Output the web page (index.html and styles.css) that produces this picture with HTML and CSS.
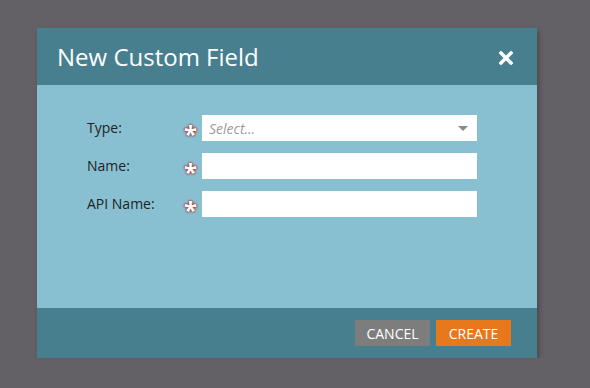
FILE: index.html
```html
<!DOCTYPE html>
<html lang="en">
<head>
    <meta charset="UTF-8">
    <title>New Custom Field</title>
    <link rel="stylesheet" href="styles.css">
</head>
<body>
    <div class="modal">
        <div class="modal-header">
            <h1>New Custom Field</h1>
            <span class="close">
                <svg width="14" height="14" viewBox="0 0 14 14">
                    <path d="M2 2 L12 12 M12 2 L2 12" stroke="#fff" stroke-width="3.4" stroke-linecap="square"/>
                </svg>
            </span>
        </div>
        <div class="modal-body">
            <div class="field">
                <label>Type:</label>
                <span class="req">*</span>
                <div class="select">
                    <span class="placeholder">Select...</span>
                    <span class="arrow"></span>
                </div>
            </div>
            <div class="field">
                <label>Name:</label>
                <span class="req">*</span>
                <input type="text" class="input">
            </div>
            <div class="field">
                <label>API Name:</label>
                <span class="req">*</span>
                <input type="text" class="input">
            </div>
        </div>
        <div class="modal-footer">
            <button class="btn btn-cancel">CANCEL</button>
            <button class="btn btn-create">CREATE</button>
        </div>
    </div>
</body>
</html>
```

FILE: styles.css
```css
body {
    background-color: #636166;
    font-family: 'Open Sans', sans-serif;
    margin: 0;
    padding: 28px 0 0 37px;
}
.modal {
    width: 500px;
    height: 330px;
    display: flex;
    flex-direction: column;
    box-shadow: 2px 3px 5px rgba(0, 0, 0, 0.25);
}
.modal-header {
    height: 57px;
    background-color: #477f8f;
    display: flex;
    align-items: center;
    justify-content: space-between;
    padding: 0 24px 0 20px;
}
.modal-header h1 {
    margin: 0;
    font-size: 24px;
    font-weight: 400;
    color: #fff;
}
.close {
    display: flex;
    margin-top: 2px;
}
.modal-body {
    flex: 1;
    background-color: #88c0d2;
    padding: 30px 0 0 50px;
}
.field {
    display: flex;
    align-items: center;
    margin-bottom: 12px;
}
.field label {
    width: 97px;
    font-size: 14px;
    color: #222;
    margin-top: -1px;
}
.req {
    width: 18px;
    font-size: 24px;
    line-height: 20px;
    height: 16px;
    color: #fff;
    font-weight: 700;
    text-shadow: 0 0 2px #b02828, 0 0 1px #b02828, 0 0 3px #b02828;
    margin-top: 8px;
}
.select, .input {
    width: 275px;
    height: 26px;
    box-sizing: border-box;
    background-color: #fff;
    border: none;
    margin: 0;
    padding: 0 7px;
    font-family: inherit;
    font-size: 14px;
}
.select {
    display: flex;
    align-items: center;
    justify-content: space-between;
}
.placeholder {
    font-style: italic;
    color: #9a9a9a;
}
.arrow {
    width: 0;
    height: 0;
    border-left: 5px solid transparent;
    border-right: 5px solid transparent;
    border-top: 5px solid #8a8a8a;
    margin-right: 2px;
}
.modal-footer {
    height: 50px;
    background-color: #477f8f;
    display: flex;
    align-items: center;
    justify-content: flex-end;
    gap: 6px;
    padding-right: 26px;
}
.btn {
    width: 75px;
    height: 26px;
    border: none;
    color: #fff;
    font-family: inherit;
    font-size: 14px;
    padding: 0;
}
.btn-cancel {
    background-color: #7d7d7d;
}
.btn-create {
    background-color: #e8781c;
}
```
